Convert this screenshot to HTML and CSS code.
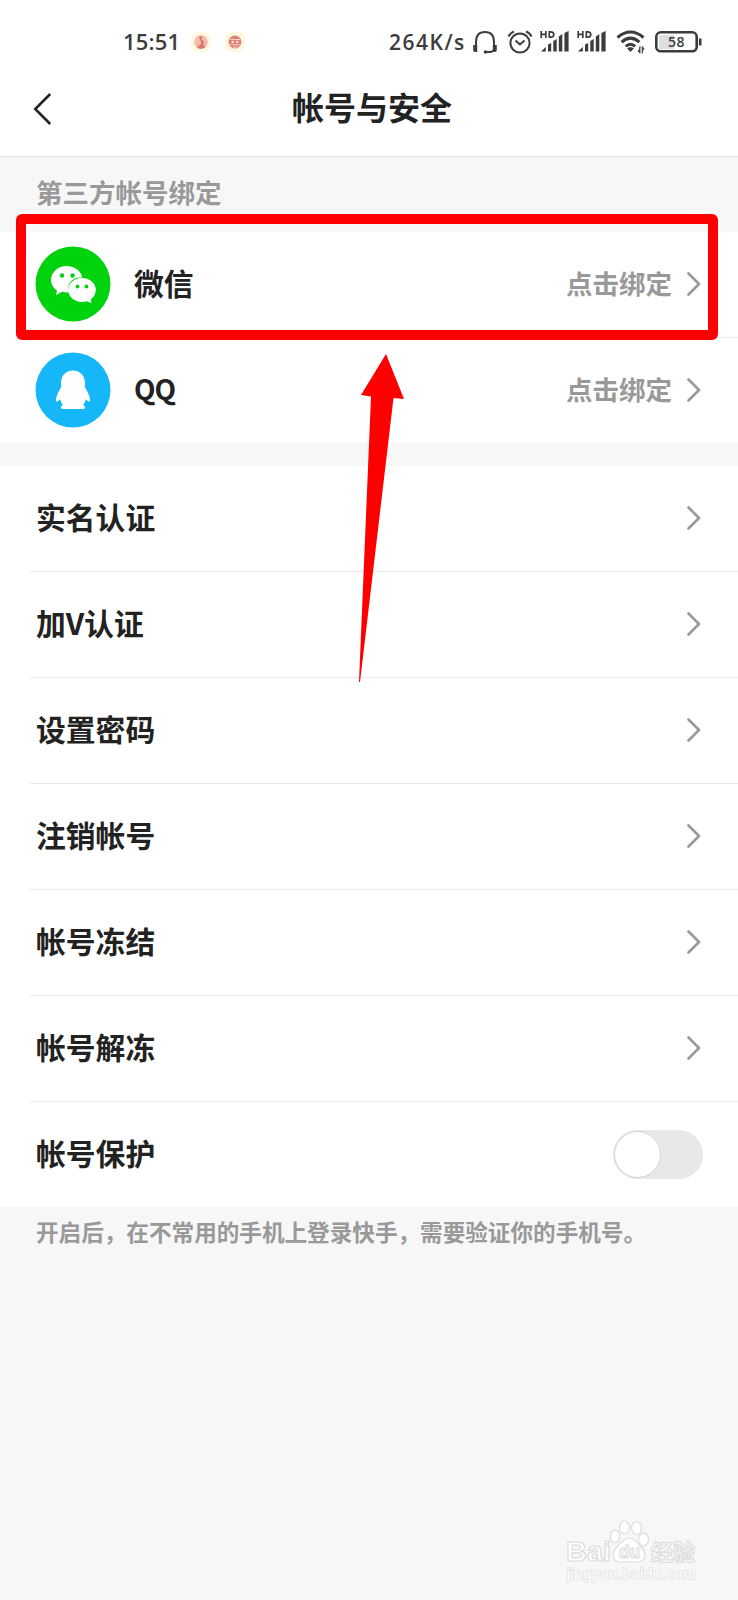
FILE: index.html
```html
<!DOCTYPE html>
<html lang="zh-CN">
<head>
    <meta charset="UTF-8">
    <meta name="viewport" content="width=device-width, initial-scale=1.0">
    <title>帐号与安全</title>
    <link rel="stylesheet" href="styles.css">
</head>
<body>
    <svg class="defs" width="0" height="0">
        <symbol id="chevron" viewBox="0 0 14 24">
            <path d="M1.5 1.5 12 12 1.5 22.5" fill="none" stroke="#999" stroke-width="2.6" stroke-linecap="round" stroke-linejoin="round"/>
        </symbol>
        <symbol id="signal" viewBox="0 0 30 24">
            <g fill="none" stroke="#3c3c3c" stroke-width="1.7">
                <path d="M1.2 1v7M5.8 1v7M1.2 4.400h4.600M9.300 1.800v5.400h1.300q3.200 0 3.200-2.700t-3.200-2.700z"/>
            </g>
            <path fill="#3c3c3c" d="M1 21.500 5.800 17v4.500zM8 14.500l3.200-1.500v8.500H8zM13.300 11l3.400-2v12.500h-3.400zM18.800 6.500 22.300 4v17.500h-3.500zM24.400 3l4.200-2v20.500h-4.200z"/>
        </symbol>
    </svg>

    <div class="status-bar">
        <div class="status-left">
            <span class="clock">15:51</span>
            <svg class="notify" width="20" height="20" viewBox="0 0 20 20">
                <rect width="20" height="20" rx="7" fill="#fff8df"/>
                <circle cx="10" cy="10" r="6.800" fill="#f3b9aa"/>
                <path d="M8 4.500 10.800 4l.3 3.800 2.500 3-1.800 1 2.400 3.600Q10 18 5.800 15.400l4.600-4.200z" fill="#d97872"/>
            </svg>
            <svg class="notify" width="20" height="20" viewBox="0 0 20 20">
                <rect width="20" height="20" rx="7" fill="#fff8df"/>
                <circle cx="10" cy="10" r="6.400" fill="#dc817a"/>
                <path d="M4.800 7.500h10.400M5 12.700h10M8 15h4" stroke="#f9d2bd" stroke-width="1.100"/>
                <circle cx="7.700" cy="10" r="1.200" fill="#fbe3cf"/>
                <circle cx="12.300" cy="10" r="1.200" fill="#fbe3cf"/>
            </svg>
        </div>
        <div class="status-right">
            <span class="speed">264K/s</span>
            <svg width="26" height="24" viewBox="0 0 26 24">
                <path d="M4 20V12Q4 2 13 2t9 10v8M22 20l-3 2h-6" fill="none" stroke="#3c3c3c" stroke-width="2"/>
                <path d="M1.200 15h4v7H3q-1.800 0-1.800-2zM20.800 15h4v5q0 2-1.800 2h-2.200z" fill="#3c3c3c"/>
                <circle cx="13.500" cy="22" r="1.800" fill="#3c3c3c"/>
            </svg>
            <svg class="alarm" width="26" height="24" viewBox="0 0 26 24">
                <g fill="none" stroke="#3c3c3c" stroke-width="2">
                    <circle cx="13" cy="13" r="9.600"/>
                    <path d="M1.500 6.500Q3 3 7 1.500M24.500 6.500Q23 3 19 1.500M8.500 10.500l4.500 4 4.500-4"/>
                </g>
            </svg>
            <svg class="signal" width="30" height="24"><use href="#signal"/></svg>
            <svg class="signal" width="30" height="24"><use href="#signal"/></svg>
            <svg class="wifi" width="30" height="24" viewBox="0 0 30 24">
                <path d="M1.500 7.500q13-11 26 0M5.600 12.100q8.900-8 17.800 0M9.800 16.300q4.700-4.200 9.400 0" fill="none" stroke="#3c3c3c" stroke-width="3"/>
                <path d="M11.500 18.500q3-2.200 6 0l-3 3zM24 16.500v6.800l-2-2.600h1zM26.200 23.300v-6.800l2 2.600h-1z" fill="#3c3c3c" stroke="#3c3c3c" stroke-width=".8"/>
            </svg>
            <svg class="battery" width="48" height="22" viewBox="0 0 48 22">
                <rect x="4" y="4" width="15" height="14" fill="#dedede"/>
                <rect x="1.300" y="1.300" width="40.400" height="19" rx="4.500" fill="none" stroke="#3c3c3c" stroke-width="2.600"/>
                <path d="M45.200 7.500v7" stroke="#3c3c3c" stroke-width="2.600"/>
                <text class="battery-text" x="21.500" y="16.300" text-anchor="middle">58</text>
            </svg>
        </div>
    </div>

    <header class="nav">
        <svg class="back" width="20" height="34" viewBox="0 0 20 34">
            <path d="M17.200 2 2.200 17l15 15" fill="none" stroke="#222" stroke-width="2.500"/>
        </svg>
        <h1 class="nav-title">帐号与安全</h1>
    </header>

    <main class="content">
        <h2 class="section-title">第三方帐号绑定</h2>

        <div class="group accounts">
            <div class="row">
                <svg class="avatar" width="76" height="76" viewBox="0 0 76 76">
                    <circle cx="38" cy="38" r="37.500" fill="#00d20d"/>
                    <path d="M32 20c-9 0-16 6.200-16 14 0 4.500 2.300 8 6 10.500L21 49l6-3.200q3 .9 7 .7C31 37 38 30.500 47.500 31.500 46 25 39.500 20 32 20z" fill="#fff"/>
                    <ellipse cx="47" cy="44" rx="13.800" ry="11.900" fill="#fff"/>
                    <path d="M50 54.500l6.500 2.500-1.300-6z" fill="#fff"/>
                    <g fill="#00d20d">
                        <circle cx="27" cy="29.500" r="2.200"/>
                        <circle cx="37.500" cy="29.500" r="2.200"/>
                        <circle cx="42.500" cy="40.500" r="1.900"/>
                        <circle cx="51.500" cy="40.500" r="1.900"/>
                    </g>
                </svg>
                <span class="label">微信</span>
                <span class="hint">点击绑定</span>
                <svg class="chevron" width="14" height="24"><use href="#chevron"/></svg>
            </div>
            <div class="row">
                <svg class="avatar" width="76" height="76" viewBox="0 0 76 76">
                    <circle cx="38" cy="38" r="37.500" fill="#16b7f8"/>
                    <path d="M38 18.500c-7.500 0-12 5.500-12 13v4c-3 5-5 9-5 12.500 0 2.500 1.500 2.300 4-1 .6 2.500 1.600 4.300 3 6-2.600 1-3 4 0 4h20c3 0 2.600-3 0-4 1.400-1.700 2.400-3.500 3-6 2.500 3.300 4 3.500 4 1 0-3.500-2-7.500-5-12.500v-4c0-7.500-4.500-13-12-13z" fill="#fff"/>
                </svg>
                <span class="label latin">QQ</span>
                <span class="hint">点击绑定</span>
                <svg class="chevron" width="14" height="24"><use href="#chevron"/></svg>
            </div>
            <div class="highlight"></div>
            <svg class="arrow" width="46" height="328" viewBox="0 0 46 328">
                <path d="M27 0 45 45 34.500 44 1 328 0 328 12 42.500 2 41z" fill="#fe0000"/>
            </svg>
        </div>

        <div class="group settings">
            <div class="row">
                <span class="label">实名认证</span>
                <svg class="chevron" width="14" height="24"><use href="#chevron"/></svg>
            </div>
            <div class="row">
                <span class="label">加V认证</span>
                <svg class="chevron" width="14" height="24"><use href="#chevron"/></svg>
            </div>
            <div class="row">
                <span class="label">设置密码</span>
                <svg class="chevron" width="14" height="24"><use href="#chevron"/></svg>
            </div>
            <div class="row">
                <span class="label">注销帐号</span>
                <svg class="chevron" width="14" height="24"><use href="#chevron"/></svg>
            </div>
            <div class="row">
                <span class="label">帐号冻结</span>
                <svg class="chevron" width="14" height="24"><use href="#chevron"/></svg>
            </div>
            <div class="row">
                <span class="label">帐号解冻</span>
                <svg class="chevron" width="14" height="24"><use href="#chevron"/></svg>
            </div>
            <div class="row">
                <span class="label">帐号保护</span>
                <span class="switch"><span class="knob"></span></span>
            </div>
        </div>

        <p class="note">开启后，在不常用的手机上登录快手，需要验证你的手机号。</p>
    </main>

    <svg class="watermark" width="138" height="68" viewBox="0 0 138 68">
        <g class="mark">
            <text x="2" y="42.500" font-size="28" textLength="45" lengthAdjust="spacingAndGlyphs">Bai</text>
            <ellipse cx="51" cy="18.500" rx="4.800" ry="6.300"/>
            <ellipse cx="60.500" cy="9.500" rx="5" ry="6.500"/>
            <ellipse cx="72.500" cy="10" rx="5" ry="6.500"/>
            <ellipse cx="79.500" cy="21.500" rx="5" ry="6.300"/>
            <path d="M65 20c-6 0-9 6-13 10-5 5-3.500 14 4.500 14h17c8 0 9.500-9 4.500-14-4-4-7-10-13-10z"/>
            <text x="55" y="40" font-size="19" textLength="21" lengthAdjust="spacingAndGlyphs">du</text>
            <text x="87" y="42" font-size="22">经验</text>
        </g>
        <text class="site" x="3" y="61" font-size="14.500" textLength="129" lengthAdjust="spacingAndGlyphs">jingyan.baidu.com</text>
    </svg>
</body>
</html>
```

FILE: styles.css
```css
* {
    box-sizing: border-box;
}
body {
    margin: 0;
    min-height: 1600px;
    position: relative;
    background: #f7f7f7;
    color: #222;
    font-family: "Noto Sans CJK SC", sans-serif;
    font-weight: 700;
}
svg {
    display: block;
    flex: none;
}
.defs {
    position: absolute;
}

/* status bar */
.status-bar {
    display: flex;
    justify-content: space-between;
    height: 60px;
    padding: 24px 35px 0 123px;
    background: #fff;
    color: #3c3c3c;
    font-family: "Open Sans", "Noto Sans CJK SC", sans-serif;
    font-weight: 600;
}
.status-left,
.status-right {
    display: flex;
    align-items: center;
    height: 36px;
}
.clock {
    width: 68px;
    font-size: 22px;
    letter-spacing: 0.2px;
    line-height: 34px;
    padding-bottom: 2px;
}
.notify {
    margin-right: 14px;
}
.speed {
    width: 83px;
    font-size: 21px;
    letter-spacing: 1.5px;
    line-height: 36px;
}
.alarm {
    margin-left: 9px;
}
.signal {
    margin-left: 7px;
}
.wifi {
    margin-left: 9px;
}
.battery {
    margin-left: 9px;
}
.battery-text {
    font-size: 14px;
    letter-spacing: 0.5px;
    fill: #3c3c3c;
}

/* title bar */
.nav {
    display: flex;
    align-items: center;
    height: 97px;
    padding-left: 33px;
    background: #fff;
    border-bottom: 1px solid #e4e4e4;
}
.back {
    margin-top: 2px;
}
.nav-title {
    margin: 0 0 0 239px;
    padding-bottom: 4px;
    font-size: 32px;
    line-height: 40px;
}

.section-title {
    height: 75px;
    margin: 0;
    padding-left: 36px;
    font-size: 26.5px;
    line-height: 69px;
    color: #999;
}

/* lists */
.group {
    background: #fff;
}
.accounts {
    position: relative;
    z-index: 1;
    height: 211px;
    margin-bottom: 23px;
}
.settings {
    height: 741px;
}
.row {
    position: relative;
    display: flex;
    align-items: center;
    height: 106px;
    padding: 0 37px 2px 36px;
}
.row::after {
    content: "";
    position: absolute;
    left: 30px;
    right: 0;
    bottom: 0;
    height: 1px;
    background: #e8e8e8;
}
.accounts .row:nth-child(2)::after,
.settings .row:last-child::after {
    display: none;
}
.avatar {
    margin: 0 23px 0 -1px;
}
.label {
    flex: 1;
    padding-bottom: 5px;
    font-size: 29.8px;
    line-height: 40px;
}
.latin {
    font-size: 28px;
    letter-spacing: -1px;
}
.hint {
    margin-right: 15px;
    padding-bottom: 3px;
    font-size: 26.5px;
    line-height: 40px;
    color: #999;
}

.switch {
    width: 90px;
    height: 49px;
    margin-right: -2px;
    padding: 1px;
    border-radius: 25px;
    background: #e8e8e8;
}
.knob {
    display: block;
    width: 47px;
    height: 47px;
    border: 1px solid #d6d6d6;
    border-radius: 50%;
    background: #fff;
}

.note {
    margin: 0;
    padding-left: 36px;
    font-size: 22.6px;
    line-height: 50px;
    color: #999;
    white-space: nowrap;
}

/* callout over the first account */
.highlight {
    position: absolute;
    left: 16px;
    top: -18px;
    width: 702px;
    height: 126px;
    border: 10.5px solid #fe0000;
    border-radius: 6px;
}
.arrow {
    position: absolute;
    left: 359px;
    top: 122px;
}

.watermark {
    position: absolute;
    left: 564px;
    top: 1518px;
}
.mark {
    fill: #fff;
    stroke: #dcdcdc;
    stroke-width: 1.2;
    font-family: "Liberation Sans", "Noto Sans CJK SC", sans-serif;
}
.site {
    fill: #fff;
    stroke: #e2e2e2;
    stroke-width: 1.4;
    paint-order: stroke;
    font-family: "Liberation Sans", sans-serif;
    font-weight: 400;
}
```
